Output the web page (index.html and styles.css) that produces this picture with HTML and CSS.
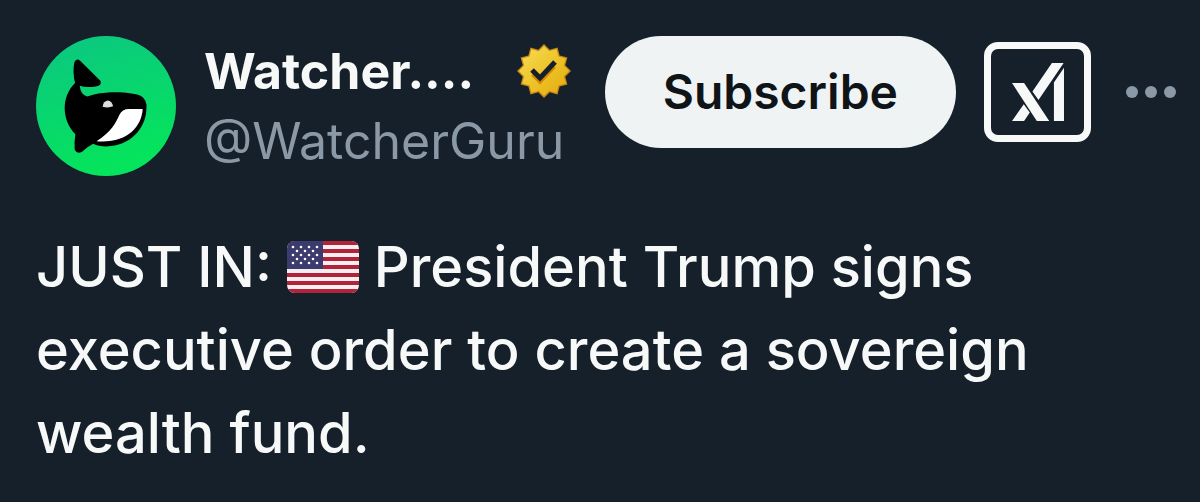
FILE: index.html
```html
<!DOCTYPE html>
<html lang="en">

<head>
    <meta charset="UTF-8">
    <meta name="viewport" content="width=device-width, initial-scale=1.0">
    <title>Watcher.Guru</title>
    <link rel="stylesheet" href="styles.css">
</head>

<body>
    <article class="post">
        <header class="post-header">
            <svg class="avatar" viewBox="36 34 416 416" role="img" aria-label="Watcher.Guru">
                <defs>
                    <linearGradient id="sea" x1="0" y1="0" x2="0.3" y2="1">
                        <stop offset="0" stop-color="#0cc583" />
                        <stop offset="1" stop-color="#05e45c" />
                    </linearGradient>
                </defs>
                <circle cx="244" cy="242" r="208" fill="url(#sea)" />
                <path d="M150 112 Q156 98 168 108 L228 168 Q232 182 214 184 Q184 188 166 182 Q168 208 188 214 C225 198 310 196 348 212 Q368 224 364 252 C362 310 315 362 245 362 Q222 362 206 354 Q186 364 173 378 Q158 386 151 372 Q149 350 153 326 C112 285 110 215 152 174 Q144 140 150 112 Z" fill="#000" />
                <path d="M353 251 C350 305 305 354 216 347 C260 318 272 295 284 268 Q292 251 312 251 Z" fill="#fff" />
                <path d="M234 244 Q236 228 249 226 Q262 228 265 243 Q250 249 234 244 Z" fill="#ddd" />
            </svg>

            <div class="author">
                <div class="name-row">
                    <span class="name">Watcher....</span>
                    <svg class="badge" viewBox="0 0 54 54" role="img" aria-label="Verified organization">
                        <defs>
                            <linearGradient id="gold" x1="0" y1="0" x2="1" y2="1">
                                <stop offset="0" stop-color="#f6df5c" />
                                <stop offset="0.5" stop-color="#eec42a" />
                                <stop offset="1" stop-color="#e2a90c" />
                            </linearGradient>
                        </defs>
                        <path d="M27 0 32.7 5.7 40.5 3.6 42.6 11.4 50.4 13.5 48.2 21.3 54 27 48.2 32.7 50.4 40.5 42.6 42.6 40.5 50.4 32.7 48.2 27 54 21.3 48.2 13.5 50.4 11.4 42.6 3.6 40.5 5.8 32.7 0 27 5.8 21.3 3.6 13.5 11.4 11.4 13.5 3.6 21.3 5.7Z" fill="#c98a12" />
                        <path d="M27 2 32.2 7 39.6 5.2 41.5 12.5 48.8 14.4 46.8 21.6 52 27 46.8 32.2 48.8 39.6 41.5 41.5 39.6 48.8 32.2 46.8 27 52 21.8 46.8 14.4 48.8 12.5 41.5 5.2 39.6 7.2 32.2 2 27 7.2 21.6 5.2 14.4 12.5 12.5 14.4 5.2 21.8 7.2Z" fill="url(#gold)" />
                        <path d="M16 30 23 37 37 22" fill="none" stroke="#d18800" stroke-width="5" />
                        <path d="M15 26 23 34 38 18" fill="none" stroke="#17202a" stroke-width="5" />
                    </svg>
                </div>
                <a class="handle" href="#">@WatcherGuru</a>
            </div>

            <div class="actions">
                <button class="subscribe" type="button">Subscribe</button>
                <button class="grok" type="button" aria-label="Explain this post">
                    <svg viewBox="110 99 155 173">
                        <path d="M110 159h36l75 113h-37zM229 99h35L189 209 171 184zM110 272h36l17-25-18-25zM235 157 265 113V272h-30z" />
                    </svg>
                </button>
                <button class="more" type="button" aria-label="More">
                    <svg viewBox="0 0 50 12">
                        <circle cx="6" cy="6" r="6" />
                        <circle cx="25" cy="6" r="6" />
                        <circle cx="44" cy="6" r="6" />
                    </svg>
                </button>
            </div>
        </header>

        <p class="post-text">JUST IN: <svg class="flag" viewBox="0 0 72 52" role="img" aria-label="United States">
                <defs>
                    <clipPath id="flag-shape">
                        <rect width="72" height="52" rx="8" />
                    </clipPath>
                    <pattern id="stars" width="8" height="8" patternUnits="userSpaceOnUse">
                        <circle cx="6" cy="6" r="1.3" fill="#fff" />
                        <circle cx="2" cy="2" r="1.3" fill="#fff" />
                    </pattern>
                </defs>
                <g clip-path="url(#flag-shape)">
                    <rect width="72" height="52" fill="#f3eef0" />
                    <path d="M0 2H72M0 10H72M0 18H72M0 26H72M0 34H72M0 42H72M0 50H72" stroke="#b22339" stroke-width="4" />
                    <rect width="36" height="28" fill="#3c3b70" />
                    <rect x="4" y="4" width="28" height="20" fill="url(#stars)" />
                </g>
            </svg> President Trump signs executive order to create a sovereign wealth fund.</p>
    </article>
</body>

</html>
```
FILE: styles.css
```css
body {
    margin: 0;
    background-color: #16202a;
    color: #f7f9f9;
    font-family: Inter, "Liberation Sans", sans-serif;
}

button {
    padding: 0;
    border: none;
    background: none;
    font-family: inherit;
    cursor: pointer;
}

svg {
    display: block;
}

.post {
    padding: 36px 24px 36px 36px;
}

.post-header {
    display: flex;
    align-items: flex-start;
    gap: 28px;
}

.avatar {
    flex: none;
    width: 140px;
    height: 140px;
}

.author {
    flex: 1;
    min-width: 0;
}

.name-row {
    display: flex;
    justify-content: space-between;
    align-items: center;
    height: 70px;
}

.name {
    font-size: 50px;
    font-weight: 700;
}

.badge {
    flex: none;
    width: 54px;
    height: 54px;
}

.handle {
    display: block;
    color: #8b98a5;
    font-size: 50px;
    line-height: 70px;
    text-decoration: none;
}

.actions {
    display: flex;
    align-items: center;
    gap: 28px;
    margin-left: 6px;
}

.subscribe {
    padding: 0 58px;
    border-radius: 56px;
    background-color: #eff3f4;
    color: #0f1419;
    font-size: 48px;
    font-weight: 600;
    line-height: 112px;
}

.grok {
    display: flex;
    justify-content: center;
    align-items: center;
    box-sizing: border-box;
    width: 107px;
    height: 100px;
    border: 7px solid #f7f9f9;
    border-radius: 14px;
}

.grok svg {
    width: 52px;
    height: 58px;
    fill: #f7f9f9;
}

.more {
    margin-left: 7px;
}

.more svg {
    width: 50px;
    height: 12px;
    fill: #8b98a5;
}

.post-text {
    margin: 50px 0 0;
    font-size: 56px;
    font-weight: 500;
    line-height: 83px;
}

.flag {
    display: inline-block;
    width: 72px;
    height: 52px;
    vertical-align: -6px;
}
```
